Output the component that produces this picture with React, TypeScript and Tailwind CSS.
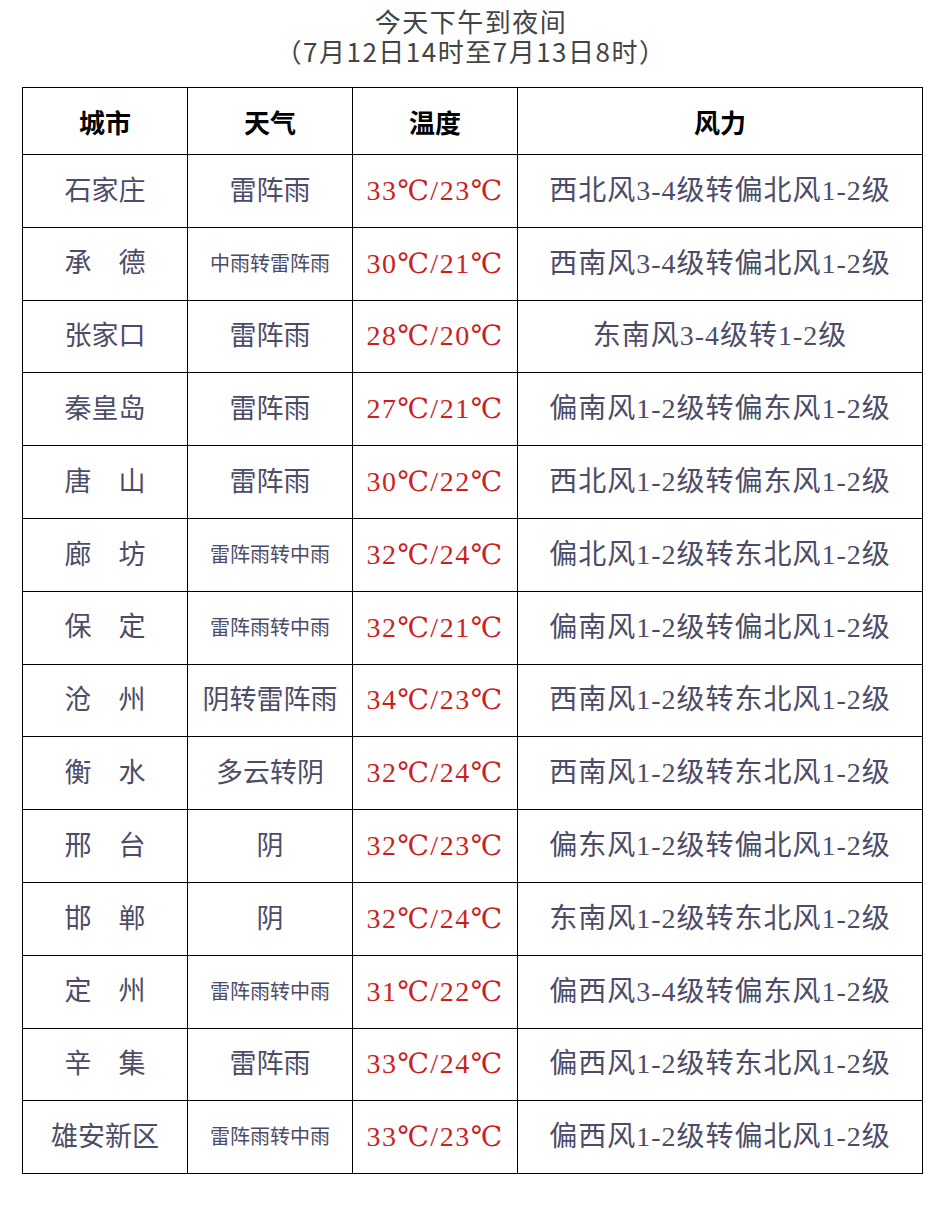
const rows = [
  { city: "石家庄", weather: "雷阵雨", small: false, temp: "33℃/23℃", wind: "西北风3-4级转偏北风1-2级" },
  { city: "承　德", weather: "中雨转雷阵雨", small: true, temp: "30℃/21℃", wind: "西南风3-4级转偏北风1-2级" },
  { city: "张家口", weather: "雷阵雨", small: false, temp: "28℃/20℃", wind: "东南风3-4级转1-2级" },
  { city: "秦皇岛", weather: "雷阵雨", small: false, temp: "27℃/21℃", wind: "偏南风1-2级转偏东风1-2级" },
  { city: "唐　山", weather: "雷阵雨", small: false, temp: "30℃/22℃", wind: "西北风1-2级转偏东风1-2级" },
  { city: "廊　坊", weather: "雷阵雨转中雨", small: true, temp: "32℃/24℃", wind: "偏北风1-2级转东北风1-2级" },
  { city: "保　定", weather: "雷阵雨转中雨", small: true, temp: "32℃/21℃", wind: "偏南风1-2级转偏北风1-2级" },
  { city: "沧　州", weather: "阴转雷阵雨", small: false, temp: "34℃/23℃", wind: "西南风1-2级转东北风1-2级" },
  { city: "衡　水", weather: "多云转阴", small: false, temp: "32℃/24℃", wind: "西南风1-2级转东北风1-2级" },
  { city: "邢　台", weather: "阴", small: false, temp: "32℃/23℃", wind: "偏东风1-2级转偏北风1-2级" },
  { city: "邯　郸", weather: "阴", small: false, temp: "32℃/24℃", wind: "东南风1-2级转东北风1-2级" },
  { city: "定　州", weather: "雷阵雨转中雨", small: true, temp: "31℃/22℃", wind: "偏西风3-4级转偏东风1-2级" },
  { city: "辛　集", weather: "雷阵雨", small: false, temp: "33℃/24℃", wind: "偏西风1-2级转东北风1-2级" },
  { city: "雄安新区", weather: "雷阵雨转中雨", small: true, temp: "33℃/23℃", wind: "偏西风1-2级转偏北风1-2级" },
];

const serif = "font-['Liberation_Serif','DejaVu_Serif','Noto_Sans_CJK_SC',serif]";

export default function App() {
  return (
    <div className="w-[942px] h-[1218px] bg-white overflow-hidden">
      {/* Title */}
      <div className="pt-[6px] flex flex-col items-center text-[#444] font-['Noto_Sans_CJK_SC',sans-serif] text-[26px] tracking-[1.5px]">
        <div className="h-[30px] leading-[30px]">今天下午到夜间</div>
        <div className="h-[30px] leading-[30px]">（7月12日14时至7月13日8时）</div>
      </div>

      {/* Table */}
      <div className="mt-[21px] ml-[22px] w-[901px] border border-black">
        <div className="grid grid-cols-[165px_165px_165px_1fr] h-[66px] text-black text-[26px] font-semibold font-['Noto_Sans_CJK_SC',serif]">
          <div className="flex items-center justify-center border-r border-black">城市</div>
          <div className="flex items-center justify-center border-r border-black">天气</div>
          <div className="flex items-center justify-center border-r border-black">温度</div>
          <div className="flex items-center justify-center">风力</div>
        </div>
        {rows.map((r) => (
          <div
            key={r.city}
            className={`grid grid-cols-[165px_165px_165px_1fr] h-[72.8px] border-t border-black text-[#4d4c68] ${serif}`}
          >
            <div className="flex items-center justify-center border-r border-black text-[27px] whitespace-nowrap">
              {r.city}
            </div>
            <div
              className={`flex items-center justify-center border-r border-black whitespace-nowrap ${
                r.small ? "text-[20px]" : "text-[27px]"
              }`}
            >
              {r.weather}
            </div>
            <div className="flex items-center justify-center border-r border-black text-[28px] tracking-[1.5px] text-[#cc1f1f] whitespace-nowrap">
              {r.temp}
            </div>
            <div className="flex items-center justify-center text-[28px] tracking-[1px] whitespace-nowrap">
              {r.wind}
            </div>
          </div>
        ))}
      </div>
    </div>
  );
}
